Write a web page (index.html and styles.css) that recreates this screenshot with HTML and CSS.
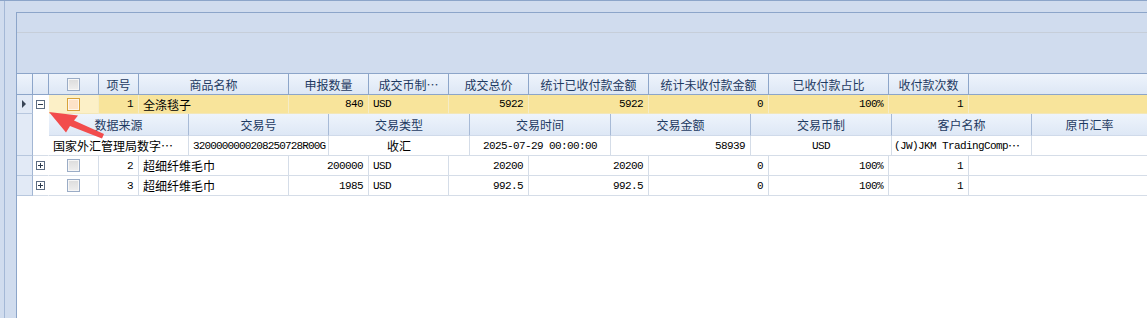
FILE: index.html
```html
<!DOCTYPE html>
<html lang="zh-CN">
<head>
<meta charset="utf-8">
<title>Grid</title>
<link rel="stylesheet" href="styles.css">
</head>
<body>
<div class="win">
  <div class="side">
    <div class="grid">
      <div class="group-panel"><div class="gp-line"></div></div>

      <div class="row head">
        <div class="c ind"></div>
        <div class="c exp"></div>
        <div class="c chk"><span class="cb"></span></div>
        <div class="c w40 ctr">项号</div>
        <div class="c w150 ctr">商品名称</div>
        <div class="c w80 ctr">申报数量</div>
        <div class="c w80 ctr">成交币制⋯</div>
        <div class="c w80 ctr">成交总价</div>
        <div class="c w120 ctr">统计已收付款金额</div>
        <div class="c w120 ctr">统计未收付款金额</div>
        <div class="c w120 ctr">已收付款占比</div>
        <div class="c w80 ctr">收付款次数</div>
        <div class="c fill"></div>
      </div>

      <div class="row data sel">
        <div class="c ind"><svg class="tri" width="5" height="8" viewBox="0 0 5 8"><polygon points="0,0 4,4 0,8" fill="#3a4656"/></svg></div>
        <div class="c exp open"><svg class="pm" width="9" height="9" viewBox="0 0 9 9"><rect x="0.5" y="0.5" width="8" height="8" fill="#fff" stroke="#5c6c82"/><line x1="2" y1="4.5" x2="7" y2="4.5" stroke="#2c3a4e"/></svg></div>
        <div class="c chk lite"><span class="cb on"></span></div>
        <div class="c w40 r n">1</div>
        <div class="c w150 l">全涤毯子</div>
        <div class="c w80 r n">840</div>
        <div class="c w80 l n">USD</div>
        <div class="c w80 r n">5922</div>
        <div class="c w120 r n">5922</div>
        <div class="c w120 r n">0</div>
        <div class="c w120 r n">100%</div>
        <div class="c w80 r n">1</div>
        <div class="c fill"></div>
      </div>

      <div class="row detail">
        <div class="c ind tall"></div>
        <div class="c exp tall open"></div>
        <div class="dgrid">
          <div class="drow dhead">
            <div class="c d140 ctr">数据来源</div>
            <div class="c d140 ctr">交易号</div>
            <div class="c d141 ctr">交易类型</div>
            <div class="c d141 ctr">交易时间</div>
            <div class="c d140 ctr">交易金额</div>
            <div class="c d141 ctr">交易币制</div>
            <div class="c d140 ctr">客户名称</div>
            <div class="c fill ctr last">原币汇率</div>
          </div>
          <div class="drow dbody">
            <div class="c d140 l">国家外汇管理局数字⋯</div>
            <div class="c d140 l n tight">3200000000208250728R00G</div>
            <div class="c d141 ctr">收汇</div>
            <div class="c d141 ctr n">2025-07-29 00:00:00</div>
            <div class="c d140 r n">58939</div>
            <div class="c d141 ctr n">USD</div>
            <div class="c d140 l2"><span class="n">(JW)JKM TradingComp</span>⋯</div>
            <div class="c fill"></div>
          </div>
        </div>
      </div>

      <div class="row data">
        <div class="c ind"></div>
        <div class="c exp"><svg class="pm" width="9" height="9" viewBox="0 0 9 9"><rect x="0.5" y="0.5" width="8" height="8" fill="#fff" stroke="#5c6c82"/><line x1="2" y1="4.5" x2="7" y2="4.5" stroke="#2c3a4e"/><line x1="4.5" y1="2" x2="4.5" y2="7" stroke="#2c3a4e"/></svg></div>
        <div class="c chk"><span class="cb"></span></div>
        <div class="c w40 r n">2</div>
        <div class="c w150 l">超细纤维毛巾</div>
        <div class="c w80 r n">200000</div>
        <div class="c w80 l n">USD</div>
        <div class="c w80 r n">20200</div>
        <div class="c w120 r n">20200</div>
        <div class="c w120 r n">0</div>
        <div class="c w120 r n">100%</div>
        <div class="c w80 r n">1</div>
        <div class="c fill"></div>
      </div>

      <div class="row data">
        <div class="c ind"></div>
        <div class="c exp"><svg class="pm" width="9" height="9" viewBox="0 0 9 9"><rect x="0.5" y="0.5" width="8" height="8" fill="#fff" stroke="#5c6c82"/><line x1="2" y1="4.5" x2="7" y2="4.5" stroke="#2c3a4e"/><line x1="4.5" y1="2" x2="4.5" y2="7" stroke="#2c3a4e"/></svg></div>
        <div class="c chk"><span class="cb"></span></div>
        <div class="c w40 r n">3</div>
        <div class="c w150 l">超细纤维毛巾</div>
        <div class="c w80 r n">1985</div>
        <div class="c w80 l n">USD</div>
        <div class="c w80 r n">992.5</div>
        <div class="c w120 r n">992.5</div>
        <div class="c w120 r n">0</div>
        <div class="c w120 r n">100%</div>
        <div class="c w80 r n">1</div>
        <div class="c fill"></div>
      </div>
    </div>
  </div>
  <svg class="arrow" width="64" height="34" viewBox="44 108 64 34">
    <polygon points="49,112 78,115.5 74,120.5 104,134 102,138.5 70,126 66,132.5" fill="#f24c4c"/>
  </svg>
</div>
</body>
</html>
```

FILE: styles.css
```css
* { box-sizing: border-box; }
html, body { margin: 0; padding: 0; }
body {
  width: 1147px;
  height: 318px;
  overflow: hidden;
  background: #d0dcee;
  font-family: "Noto Sans CJK SC", "Noto Sans", sans-serif;
  font-size: 12px;
}
.win {
  position: relative;
  height: 318px;
  border-top: 1px solid #8ca5c9;
  background: #d0dcee;
}
.side {
  margin-left: 4px;
  height: 317px;
  border-left: 1px solid #a4b8d6;
  padding: 11px 0 0 11px;
}
.grid {
  height: 306px;
  border-top: 1px solid #8ca5c9;
  border-left: 1px solid #8ca5c9;
  background: #fff;
  overflow: hidden;
}
.group-panel {
  height: 60px;
  background: #d0dcee;
  padding-top: 19px;
}
.gp-line { height: 1px; background: #c6ced9; }

.row { display: flex; width: 1130px; }
.c {
  flex: none;
  overflow: hidden;
  white-space: nowrap;
  display: flex;
  align-items: center;
  border-right: 1px solid #d5dde8;
  border-bottom: 1px solid #d5dde8;
  color: #000;
}
.ctr { justify-content: center; }
.l { padding-left: 4px; }
.l2 { padding-left: 2px; }
.r { justify-content: flex-end; padding-right: 5px; }
.n {
  font-family: "Liberation Mono", "DejaVu Sans Mono", monospace;
  font-size: 11px;
  letter-spacing: -0.6px;
}
.n.tight { letter-spacing: -0.85px; }
.ind { width: 16px; background: #e2eaf6; border-right-color: #a2b6d3; border-bottom-color: #b7c7de; justify-content: center; }
.exp { width: 16px; border-right-color: transparent; justify-content: center; }
.chk { width: 50px; justify-content: center; }
.w40 { width: 40px; }
.w80 { width: 80px; }
.w120 { width: 120px; }
.w150 { width: 150px; }
.fill { flex: 1 1 auto; border-right: 0; }

.head {
  height: 22px;
  border-top: 1px solid #8ca5c9;
  border-bottom: 1px solid #8ca5c9;
  background: linear-gradient(#eef4fc, #dde7f5);
}
.head .c {
  height: 20px;
  border-bottom: 0;
  border-right-color: #8ca5c9;
  color: #1e3a62;
  background: transparent;
}
.head .fill { border-right: 0; }

.data .c { height: 20px; }
.sel .c { height: 19px; background: #f8e49b; border-right-color: #f5ecc6; border-bottom-color: #f3e7b9; }
.sel .ind { background: #e2eaf6; border-right-color: #a2b6d3; border-bottom-color: #b7c7de; }
.sel .exp, .exp.open { background: #fff; border-bottom-color: transparent; border-right-color: transparent; }
.sel .lite { background: #fcf0c7; }

.cb {
  display: block;
  width: 13px;
  height: 13px;
  border: 1px solid #9aacc6;
  background: linear-gradient(#dcdcdc, #eeeeee);
  box-shadow: inset 0 0 0 1px #f6f6f6;
}
.cb.on {
  border-color: #d8a23a;
  background: #fde2c8;
  box-shadow: inset 0 0 0 1px #fff6ea;
}

.detail { height: 42px; }
.tall { height: 42px; }
.exp.tall { border-bottom: 1px solid #d5dde8; }
.dgrid { flex: 1 1 auto; display: flex; flex-direction: column; }
.drow { display: flex; }
.dhead {
  height: 22px;
  background: linear-gradient(#eef4fc, #dde7f5);
}
.dhead .c {
  height: 22px;
  color: #1e3a62;
  border-right-color: #a7bad6;
  border-bottom-color: #cfdaea;
}
.dhead .last { border-right: 0; }
.dbody .c { height: 20px; }
.d140 { width: 140px; }
.d141 { width: 141px; }

.arrow {
  position: absolute;
  left: 44px;
  top: 107px;
}
```
